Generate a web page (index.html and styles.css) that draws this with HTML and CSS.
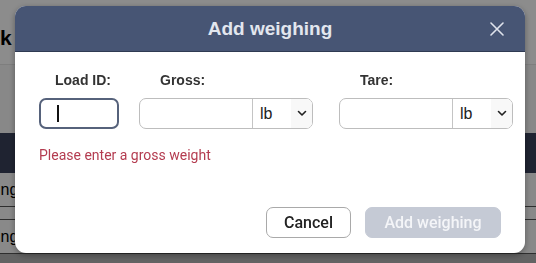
FILE: index.html
```html
<!DOCTYPE html>
<html>
<head>
<meta charset="utf-8">
<link rel="stylesheet" href="styles.css">
</head>
<body>
<div class="page">
  <div class="page-top"><span class="page-title">k</span></div>
  <div class="page-sub"></div>
  <div class="page-band"></div>
  <div class="page-row"><span>ing</span></div>
  <div class="page-row short"></div>
  <div class="page-row"><span>ing</span></div>
  <div class="page-foot"></div>
</div>
<div class="overlay"></div>
<div class="modal">
  <div class="modal-header">
    <h2 class="modal-title">Add weighing</h2>
    <button class="close-btn" aria-label="Close">
      <svg width="14" height="14" viewBox="0 0 14 14"><path d="M1 1 L13 13 M13 1 L1 13" stroke="#dfe3ec" stroke-width="1.6" fill="none" stroke-linecap="round"/></svg>
    </button>
  </div>
  <div class="modal-body">
    <div class="fields">
      <div class="field field-id">
        <label class="field-label label-id">Load ID:</label>
        <div class="text-input focused"><span class="caret"></span></div>
      </div>
      <div class="field field-gross">
        <label class="field-label">Gross:</label>
        <div class="input-group">
          <div class="group-text"></div>
          <div class="group-select"><span class="unit">lb</span><span class="arrow"><svg width="10" height="7" viewBox="0 0 10 7"><path d="M1.5 1.5 L5 5 L8.5 1.5" stroke="#222" stroke-width="1.6" fill="none" stroke-linecap="round" stroke-linejoin="round"/></svg></span></div>
        </div>
      </div>
      <div class="field field-tare">
        <label class="field-label">Tare:</label>
        <div class="input-group">
          <div class="group-text"></div>
          <div class="group-select"><span class="unit">lb</span><span class="arrow"><svg width="10" height="7" viewBox="0 0 10 7"><path d="M1.5 1.5 L5 5 L8.5 1.5" stroke="#222" stroke-width="1.6" fill="none" stroke-linecap="round" stroke-linejoin="round"/></svg></span></div>
        </div>
      </div>
    </div>
    <p class="error">Please enter a gross weight</p>
    <div class="modal-footer">
      <button class="btn btn-cancel">Cancel</button>
      <button class="btn btn-primary" disabled>Add weighing</button>
    </div>
  </div>
</div>
</body>
</html>
```
FILE: styles.css
```css
html, body {
  margin: 0;
  padding: 0;
  width: 536px;
  height: 263px;
  overflow: hidden;
  font-family: "Liberation Sans", Arial, sans-serif;
}

.page {
  display: flex;
  flex-direction: column;
  height: 263px;
  background: #fff;
}
.page-top {
  height: 64px;
  display: flex;
  align-items: center;
  border-bottom: 1px solid #e6e6e6;
}
.page-title {
  font-size: 21px;
  font-weight: bold;
  color: #000;
  margin-top: 12px;
}
.page-sub {
  height: 68px;
  background: #f7f7f7;
}
.page-band {
  height: 40px;
  background: #39415a;
}
.page-row {
  height: 33px;
  border-bottom: 1px solid #555;
  display: flex;
  align-items: center;
  font-size: 16px;
  color: #000;
  background: #fafafa;
}
.page-row span { margin-left: -3px; }
.page-row.short { height: 12px; }
.page-foot {
  flex: 1;
  background: #b4b4b4;
}

.overlay {
  position: fixed;
  inset: 0;
  background: rgba(0, 0, 0, 0.45);
}

.modal {
  position: fixed;
  left: 15px;
  top: 6px;
  width: 510px;
  height: 247px;
  border-radius: 11px;
  overflow: hidden;
  background: #fff;
  display: flex;
  flex-direction: column;
  box-shadow: 0 2px 6px rgba(0, 0, 0, 0.35);
}

.modal-header {
  position: relative;
  height: 45px;
  background: #475574;
  border-bottom: 1px solid #2f3a52;
  display: flex;
  align-items: center;
  justify-content: center;
}
.modal-title {
  margin: 0;
  font-size: 19px;
  font-weight: bold;
  color: #e2e6ee;
}
.close-btn {
  position: absolute;
  right: 21px;
  top: 16px;
  width: 14px;
  height: 14px;
  padding: 0;
  border: 0;
  background: none;
  display: flex;
}

.modal-body {
  flex: 1;
  display: flex;
  flex-direction: column;
  padding: 20px 12px 15px 24px;
}

.fields {
  display: flex;
}
.field {
  display: flex;
  flex-direction: column;
}
.field-id { width: 80px; margin-right: 20px; }
.field-gross { width: 174px; margin-right: 26px; }
.field-tare { width: 174px; }

.field-label {
  font-size: 14px;
  line-height: 16px;
  font-weight: bold;
  color: #333;
  padding-left: 21px;
  margin-bottom: 10px;
}
.field-label.label-id { padding-left: 16px; }

.text-input {
  height: 31px;
  box-sizing: border-box;
  border: 1px solid #bdbdbd;
  border-radius: 7px;
  display: flex;
  align-items: center;
}
.text-input.focused {
  border: 2px solid #56627b;
  padding-left: 16px;
}
.caret {
  width: 1.5px;
  height: 17px;
  background: #111;
}

.input-group {
  height: 31px;
  box-sizing: border-box;
  border: 1px solid #bdbdbd;
  border-radius: 7px;
  display: flex;
  overflow: hidden;
}
.group-text {
  flex: 1;
}
.group-select {
  box-sizing: border-box;
  width: 60px;
  border-left: 1px solid #c4c4c4;
  display: flex;
  align-items: center;
  font-size: 16px;
  color: #222;
  background: #fff;
}
.unit {
  padding-left: 7px;
  flex: 1;
}
.arrow {
  width: 21px;
  height: 100%;
  display: flex;
  align-items: center;
  justify-content: center;
  background: #f8f8f8;
}

.error {
  margin: 18px 0 0 0;
  font-family: Roboto, "Liberation Sans", sans-serif;
  font-size: 14px;
  line-height: 16px;
  color: #b43c50;
}

.modal-footer {
  margin-top: auto;
  margin-right: 12px;
  display: flex;
  justify-content: flex-end;
  gap: 14px;
}
.btn {
  height: 31px;
  border-radius: 7px;
  font-family: Roboto, "Liberation Sans", sans-serif;
  font-size: 16px;
  font-weight: 500;
  padding: 0;
}
.btn-cancel {
  width: 85px;
  background: #fff;
  border: 1px solid #a9a9a9;
  color: #222;
}
.btn-primary {
  width: 136px;
  background: #c5cad5;
  border: 1px solid #c5cad5;
  color: #f4f5f8;
}
```
